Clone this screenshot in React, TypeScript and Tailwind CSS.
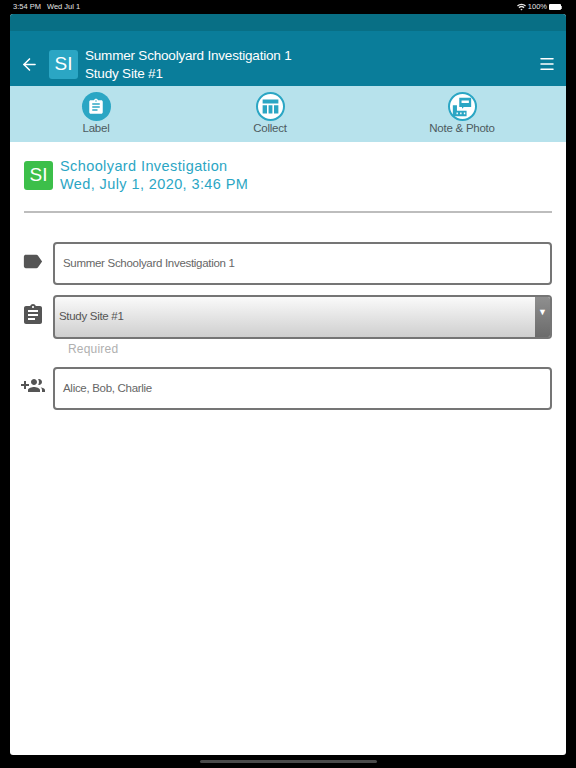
import { ArrowLeft, Menu } from "lucide-react";

function ClipboardIcon({ className }: { className: string }) {
  return (
    <svg viewBox="0 0 24 24" className={className} fill="currentColor">
      <path d="M19 3h-4.180C14.400 1.840 13.300 1 12 1s-2.400.840-2.820 2H5c-1.100 0-2 .900-2 2v14c0 1.100.900 2 2 2h14c1.100 0 2-.900 2-2V5c0-1.100-.900-2-2-2zm-7 0c.550 0 1 .450 1 1s-.450 1-1 1-1-.450-1-1 .450-1 1-1zm2 14H7v-2h7v2zm3-4H7v-2h10v2zm0-4H7V7h10v2z" />
    </svg>
  );
}

function LabelIcon() {
  return (
    <svg viewBox="0 0 24 24" className="w-[23px] h-[23px] -ml-[3px] mb-[4px] text-[#555]" fill="currentColor">
      <path d="M17.630 5.840C17.270 5.330 16.670 5 16 5L5 5.010C3.900 5.010 3 5.900 3 7v10c0 1.100.900 1.990 2 1.990L16 19c.670 0 1.270-.330 1.630-.840L22 12l-4.370-6.160z" />
    </svg>
  );
}

function GroupAddIcon() {
  return (
    <svg viewBox="0 0 24 24" className="w-[24px] h-[24px] -ml-[3px] mb-[5px] text-[#555]" fill="currentColor">
      <path d="M8 10H5V7H3v3H0v2h3v3h2v-3h3v-2zm10 1c1.660 0 2.990-1.340 2.990-3S19.660 5 18 5c-.320 0-.630.050-.910.140.570.810.900 1.790.900 2.860s-.340 2.040-.900 2.860c.280.090.590.140.910.140zm-5 0c1.660 0 2.990-1.340 2.990-3S14.660 5 13 5s-3 1.340-3 3 1.340 3 3 3zm6.620 2.160c.830.730 1.380 1.660 1.380 2.840v2h3v-2c0-1.540-2.370-2.490-4.380-2.840zM13 13c-2 0-6 1-6 3v2h12v-2c0-2-4-3-6-3z" />
    </svg>
  );
}

function TableIcon() {
  return (
    <svg viewBox="0 0 24 24" className="w-[21px] h-[21px] text-[#2ba6c4]" fill="currentColor">
      <path d="M3 4h18v4.500H3zM3 10.500h5V20H3zM9.800 10.500h4.400V20H9.800zM16 10.500h5V20h-5z" />
    </svg>
  );
}

function NotePhotoIcon() {
  return (
    <svg viewBox="0 0 24 24" className="w-[22px] h-[22px] text-[#2ba6c4]" fill="currentColor">
      <path fillRule="evenodd" d="M9 2h13v10h-8l-2 2v-2H9zM11.500 5v2.500h8V5z" />
      <path fillRule="evenodd" d="M2 10h4.500v6H17v6H2zM6 18v2h1.500v-2zM10 18v2h1.500v-2zM14 18v2h1.500v-2z" />
    </svg>
  );
}

function NavItem({ label, active, icon }: { label: string; active?: boolean; icon: React.ReactNode }) {
  return (
    <div className="flex flex-col items-center">
      <div
        className={
          active
            ? "w-[29px] h-[29px] rounded-full bg-[#2ba6c4] flex items-center justify-center"
            : "w-[29px] h-[29px] rounded-full bg-white border-2 border-[#2ba6c4] flex items-center justify-center"
        }
      >
        {icon}
      </div>
      <span className="text-[11.500px] tracking-[-0.250px] leading-[14px] text-[#4d5a60]">{label}</span>
    </div>
  );
}

export default function App() {
  return (
    <div className="w-[576px] h-[768px] bg-black flex flex-col font-['Liberation_Sans',sans-serif] overflow-hidden">
      {/* Status bar */}
      <div className="h-[14px] flex items-center justify-between pl-[13px] pr-[14px] text-[7.500px] text-[#e5e5e5]">
        <div className="flex gap-[6px]">
          <span>3:54 PM</span>
          <span>Wed Jul 1</span>
        </div>
        <div className="flex items-center gap-[2px]">
          <svg viewBox="0 0 24 24" className="w-[9px] h-[9px]" fill="currentColor">
            <path d="M12 20l-3-3.500a4.500 4.500 0 0 1 6 0zM6.500 14L4 11a12 12 0 0 1 16 0l-2.500 3a8.500 8.500 0 0 0-11 0zM2.500 9L0 6.500a18 18 0 0 1 24 0L21.500 9a15 15 0 0 0-19 0z" />
          </svg>
          <span>100%</span>
          <div className="flex items-center">
            <div className="w-[12px] h-[6px] bg-white rounded-[1px]" />
            <div className="w-[1px] h-[3px] bg-[#bbb]" />
          </div>
        </div>
      </div>

      <div className="mx-[10px] w-[556px] h-[741px] bg-white rounded-[3px] overflow-hidden flex flex-col">
        <div className="h-[17px] bg-[#086f85]" />

        {/* Header */}
        <div className="h-[55px] bg-[#0a7d9a] flex items-center pt-[11px] pl-[10px] pr-[10px] text-white">
          <ArrowLeft className="w-[19px] h-[19px]" strokeWidth={2} />
          <div className="ml-[10px] w-[29px] h-[29px] rounded-[3px] bg-[#2ba6c4] flex items-center justify-center text-[19px]">
            SI
          </div>
          <div className="ml-[7px] flex-1 pt-[1px] text-[13.500px] tracking-[-0.200px] leading-[18px]">
            <div>Summer Schoolyard Investigation 1</div>
            <div>Study Site #1</div>
          </div>
          <Menu className="w-[18px] h-[18px]" strokeWidth={2} />
        </div>

        {/* Nav */}
        <div className="h-[56px] bg-[#b7e2ec] grid grid-cols-[172px_176px_208px] pt-[6px]">
          <NavItem
            label="Label"
            active
            icon={<ClipboardIcon className="w-[18px] h-[18px] text-white" />}
          />
          <NavItem label="Collect" icon={<TableIcon />} />
          <NavItem label="Note &amp; Photo" icon={<NotePhotoIcon />} />
        </div>

        {/* Content */}
        <div className="flex-1 px-[14px] pt-[15px]">
          <div className="flex items-center gap-[7px]">
            <div className="w-[29px] h-[29px] rounded-[3px] bg-[#3cbf4a] text-white flex items-center justify-center text-[19px]">
              SI
            </div>
            <div className="text-[14.500px] leading-[18px] text-[#2ba6c4] tracking-[0.400px]">
              <div>Schoolyard Investigation</div>
              <div>Wed, July 1, 2020, 3:46 PM</div>
            </div>
          </div>
          <div className="h-[2px] bg-[#bdbdbd] mt-[18px]" />

          <div className="mt-[29px] flex flex-col">
            <div className="flex items-center">
              <div className="w-[29px] shrink-0 flex">
                <LabelIcon />
              </div>
              <div className="flex-1 h-[43px] border-2 border-[#757575] rounded-[4px] flex items-center pl-[8px] text-[11.500px] tracking-[-0.300px] text-[#666]">
                Summer Schoolyard Investigation 1
              </div>
            </div>

            <div className="flex items-center mt-[10px]">
              <div className="w-[29px] shrink-0 flex">
                <ClipboardIcon className="w-[24px] h-[24px] -ml-[3px] mb-[5px] text-[#555]" />
              </div>
              <div className="flex-1 h-[44px] border-2 border-[#757575] rounded-[4px] overflow-hidden flex bg-gradient-to-b from-[#fafafa] to-[#cfcfcf]">
                <div className="flex-1 flex items-center pl-[4px] text-[11.500px] tracking-[-0.300px] text-[#555]">Study Site #1</div>
                <div className="w-[15px] bg-gradient-to-b from-[#8f8f8f] to-[#6b6b6b] flex items-center justify-center text-white text-[9px] pb-[8px]">
                  ▼
                </div>
              </div>
            </div>
            <div className="pl-[44px] mt-[3px] text-[12px] leading-[14px] tracking-[0.200px] text-[#b0b0b0]">Required</div>

            <div className="flex items-center mt-[11px]">
              <div className="w-[29px] shrink-0 flex">
                <GroupAddIcon />
              </div>
              <div className="flex-1 h-[43px] border-2 border-[#757575] rounded-[4px] flex items-center pl-[8px] text-[11.500px] tracking-[-0.300px] text-[#666]">
                Alice, Bob, Charlie
              </div>
            </div>
          </div>
        </div>
      </div>

      {/* Home indicator */}
      <div className="flex-1 flex items-center justify-center">
        <div className="w-[177px] h-[3px] rounded-full bg-[#4a4a4a]" />
      </div>
    </div>
  );
}
